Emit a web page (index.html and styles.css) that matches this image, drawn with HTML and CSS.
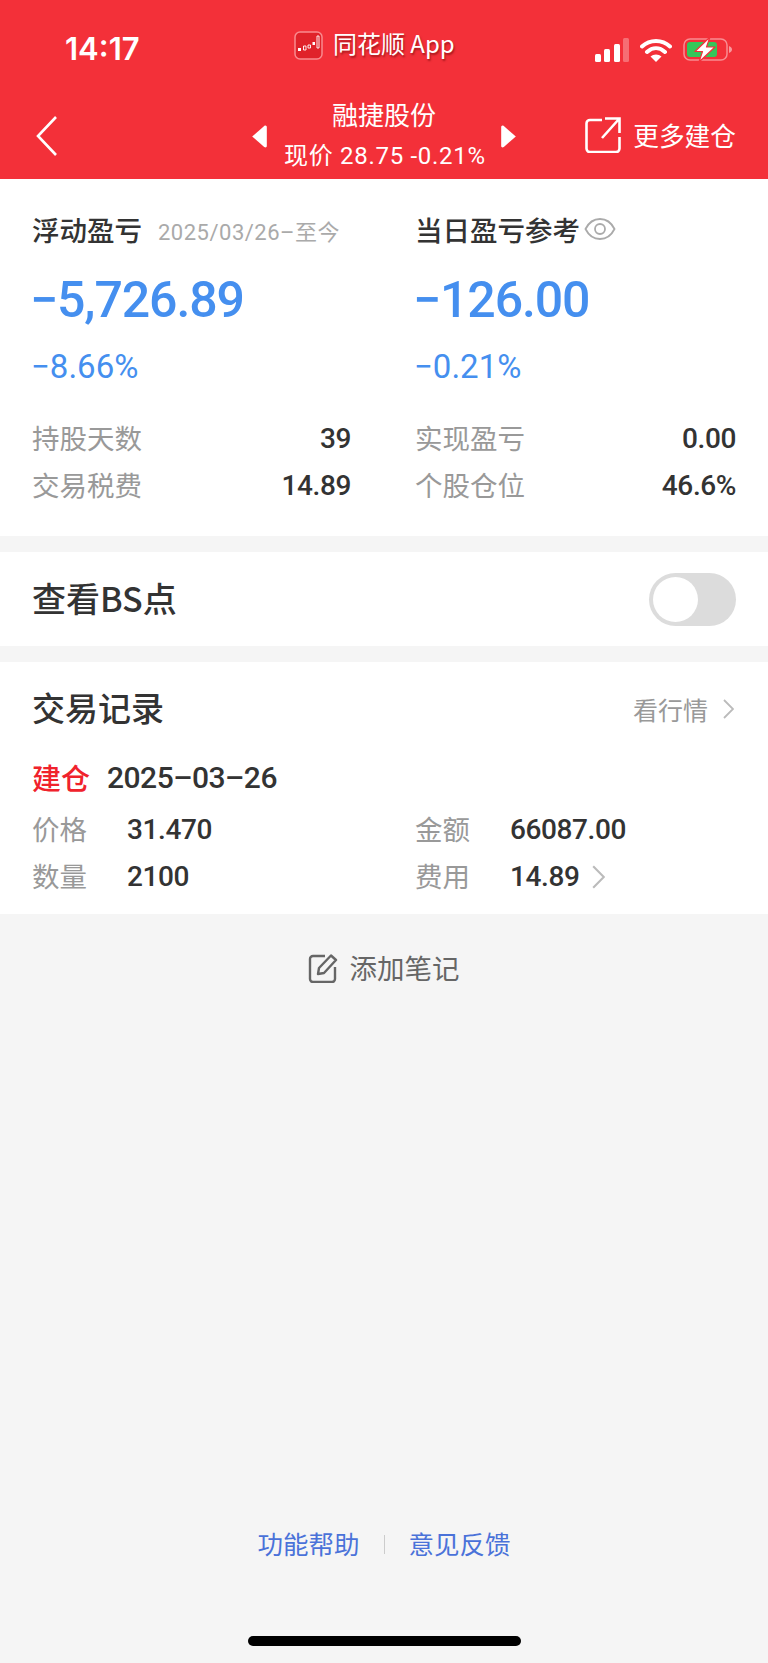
FILE: index.html
```html
<!DOCTYPE html>
<html lang="zh-CN">
<head>
<meta charset="utf-8">
<title>融捷股份</title>
<link rel="stylesheet" href="styles.css">
</head>
<body>
<div class="page">
  <header class="header">
    <div class="status">
      <span class="time">14:17</span>
      <div class="app">
        <svg class="app-icon" viewBox="0 0 29 29">
          <rect x="1" y="1" width="27" height="27" rx="5" fill="#e0222a" stroke="#f98a8e" stroke-width="1.5"/>
          <path d="M4 17h3v3H4z" fill="#fff"/>
          <path d="M9.500 15h2.500v4H9.500zM14 14h2.500v3H14z" fill="none" stroke="#fff" stroke-width=".9"/>
          <path d="M18.500 11h2.500v3h-2.500z" fill="#fff"/>
          <path d="M23 5h2v12h-2z" fill="none" stroke="#fff" stroke-width=".9"/>
        </svg>
        <span class="app-name">同花顺 App</span>
      </div>
      <div class="indicators">
        <svg class="signal" viewBox="0 0 34 24">
          <rect x="0" y="16" width="6" height="8" rx="1.5" fill="#fff"/>
          <rect x="9" y="11" width="6" height="13" rx="1.5" fill="#fff"/>
          <rect x="19" y="6" width="6" height="18" rx="1.5" fill="#fff"/>
          <rect x="28" y="0" width="6" height="24" rx="1.5" fill="#fff" opacity=".3"/>
        </svg>
        <svg class="wifi" viewBox="0 0 32 24">
          <path d="M2 8.500C10 1 22 1 30 8.500M7 14c5.500-5 12.500-5 18 0" fill="none" stroke="#fff" stroke-width="4" stroke-linecap="round"/>
          <path d="M10.500 18.500c3-2.800 8-2.800 11 0L16 24z" fill="#fff"/>
        </svg>
        <svg class="battery" viewBox="0 0 49 25">
          <rect x="1" y="2" width="43" height="21" rx="6" fill="none" stroke="#fff" stroke-opacity=".45" stroke-width="1.500"/>
          <rect x="4" y="5" width="30" height="15" rx="3" fill="#34c759"/>
          <path d="M46 9c2 .8 3 2 3 3.500s-1 2.700-3 3.500z" fill="#fff" fill-opacity=".5"/>
          <path d="M27 0 12 14.500h7.500L16 25l16-15h-8.500L27 0z" fill="#fff" stroke="#f33039" stroke-width="1.200" stroke-linejoin="round"/>
        </svg>
      </div>
    </div>
    <nav class="nav">
      <svg class="back" viewBox="0 0 22 40"><path d="M20 1 2 20l18 19" fill="none" stroke="#fff" stroke-width="2.600"/></svg>
      <div class="nav-center">
        <svg class="tri" viewBox="0 0 16 22"><path d="M15 2v18c0 1-1 2-2.500 1L1 11 12.500 1C14 0 15 1 15 2z" fill="#fff"/></svg>
        <div class="nav-title">
          <div class="stock">融捷股份</div>
          <div class="quote">现价 28.75 -0.21%</div>
        </div>
        <svg class="tri" viewBox="0 0 16 22"><path d="M1 2v18c0 1 1 2 2.500 1L15 11 3.500 1C2 0 1 1 1 2z" fill="#fff"/></svg>
      </div>
      <div class="more">
        <svg class="export" viewBox="0 0 36 36"><path d="M17 3H5a3.500 3.500 0 0 0-3.500 3.500v25A3.500 3.500 0 0 0 5 35h26a3.500 3.500 0 0 0 3.500-3.500V20M20 1.500h14.500V16M34 2 17 21" fill="none" stroke="#fff" stroke-width="2.600"/></svg>
        <span>更多建仓</span>
      </div>
    </nav>
  </header>

  <section class="card stats">
    <div class="col">
      <div class="col-head"><span class="head-title">浮动盈亏</span><span class="date">2025/03/26–至今</span></div>
      <div class="big">−5,726.89</div>
      <div class="pct">−8.66%</div>
      <div class="kv first"><span class="k">持股天数</span><span class="v">39</span></div>
      <div class="kv"><span class="k">交易税费</span><span class="v">14.89</span></div>
    </div>
    <div class="col">
      <div class="col-head"><span class="head-title">当日盈亏参考</span>
        <svg class="eye" viewBox="0 0 32 24"><path d="M1.500 12C5 5 10 2 16 2s11 3 14.500 10C27 19 22 22 16 22S5 19 1.500 12z" fill="none" stroke="#aaa" stroke-width="1.800"/><circle cx="16" cy="12" r="5" fill="none" stroke="#aaa" stroke-width="1.800"/></svg>
      </div>
      <div class="big">−126.00</div>
      <div class="pct">−0.21%</div>
      <div class="kv first"><span class="k">实现盈亏</span><span class="v">0.00</span></div>
      <div class="kv"><span class="k">个股仓位</span><span class="v">46.6%</span></div>
    </div>
  </section>

  <section class="card toggle-row">
    <span class="toggle-label">查看BS点</span>
    <div class="toggle"><div class="knob"></div></div>
  </section>

  <section class="card records">
    <div class="rec-head">
      <span class="rec-title">交易记录</span>
      <span class="rec-link">看行情
        <svg class="chev" viewBox="0 0 11 20"><path d="M1 1l9 9-9 9" fill="none" stroke="#bbb" stroke-width="1.800"/></svg>
      </span>
    </div>
    <div class="rec-type"><span class="build">建仓</span><span class="rec-date">2025–03–26</span></div>
    <div class="rec-grid">
      <div class="cell"><span class="k">价格</span><span class="rv">31.470</span></div>
      <div class="cell"><span class="k">金额</span><span class="rv">66087.00</span></div>
      <div class="cell"><span class="k">数量</span><span class="rv">2100</span></div>
      <div class="cell"><span class="k">费用</span><span class="rv">14.89</span>
        <svg class="chev chev-fee" viewBox="0 0 11 20"><path d="M1 1l9 9-9 9" fill="none" stroke="#bbb" stroke-width="1.800"/></svg>
      </div>
    </div>
  </section>

  <div class="note">
    <svg class="note-icon" viewBox="0 0 30 30"><path d="M17 3H5a3 3 0 0 0-3 3v20a3 3 0 0 0 3 3h19a3 3 0 0 0 3-3V14M10 21l1-6L23 2.500l5 4.500L16 20z" fill="none" stroke="#666" stroke-width="2.400" stroke-linejoin="round"/></svg>
    <span class="note-text">添加笔记</span>
  </div>

  <footer class="footer">
    <div class="links"><span class="link">功能帮助</span><i class="sep"></i><span class="link">意见反馈</span></div>
    <div class="home"></div>
  </footer>
</div>
</body>
</html>
```

FILE: styles.css
```css
* { box-sizing: border-box; }
html, body { margin: 0; padding: 0; }
body {
  font-family: Roboto, "Noto Sans CJK SC", sans-serif;
  background: #f5f5f5;
  color: #333;
}
.page {
  width: 768px;
  height: 1663px;
  display: flex;
  flex-direction: column;
  overflow: hidden;
}

/* header */
.header { height: 179px; background: #f33039; color: #fff; }
.status {
  height: 98px;
  padding: 30px 36px 0 65px;
  display: flex;
  align-items: flex-start;
  justify-content: space-between;
}
.time { font-size: 31px; font-weight: 600; line-height: 38px; font-family: Inter, Roboto, sans-serif; }
.app { display: flex; align-items: center; gap: 10px; height: 30px; margin-left: 14px; }
.app-icon { width: 29px; height: 29px; }
.app-name { font-size: 24px; line-height: 30px; margin-top: -4px; text-shadow: 1px 2px 2px rgba(90,0,0,.5); font-family: "Noto Sans CJK SC", sans-serif; }
.indicators { display: flex; align-items: center; gap: 11px; margin-top: 7px; }
.signal { width: 34px; height: 24px; }
.wifi { width: 32px; height: 24px; }
.battery { width: 49px; height: 25px; }

.nav {
  height: 81px;
  padding: 0 32px 0 36px;
  display: flex;
  align-items: flex-start;
}
.back { width: 22px; height: 40px; margin-top: 18px; }
.nav-center {
  width: 266px;
  margin-left: 193px;
  display: flex;
  align-items: flex-start;
  justify-content: space-between;
}
.tri { width: 17px; height: 23px; margin-top: 27px; flex: none; }
.nav-title { text-align: center; white-space: nowrap; width: 200px; flex: none; margin: 0 -16px; }
.stock { font-size: 26px; line-height: 32px; font-family: "Noto Sans CJK SC", sans-serif; }
.quote { font-size: 24px; line-height: 30px; margin-top: 11px; letter-spacing: .7px; font-family: Roboto, "Noto Sans CJK SC", sans-serif; }
.more { margin-left: auto; display: flex; align-items: center; gap: 12px; font-size: 25.700px; margin-top: 19px; font-family: "Noto Sans CJK SC", sans-serif; line-height: 36px; }
.export { width: 36px; height: 36px; }

/* cards */
.card { background: #fff; }
.stats {
  height: 357px;
  padding: 33px 32px 0;
  display: grid;
  grid-template-columns: 319px 321px;
  column-gap: 64px;
  margin-bottom: 16px;
}
.col-head { display: flex; align-items: center; height: 34px; }
.head-title { font-size: 27.500px; font-weight: 500; color: #333; line-height: 34px; font-family: "Noto Sans CJK SC", sans-serif; }
.date { font-size: 22px; color: #aaa; margin-left: 16px; letter-spacing: .5px; margin-top: 2px; }
.eye { width: 32px; height: 24px; margin-left: 4px; }
.big { font-size: 50px; line-height: 58px; color: #458fef; margin: 25px 0 0 -2px; font-weight: 500; letter-spacing: -1.100px; }
.pct { font-size: 33px; line-height: 40px; color: #458fef; margin: 18px 0 0 -1px; }
.kv { display: flex; justify-content: space-between; align-items: center; height: 47px; }
.kv.first { margin-top: 28px; }
.k { font-size: 27.500px; color: #999; line-height: 36px; margin-top: -3px; font-family: "Noto Sans CJK SC", sans-serif; }
.v { font-size: 28px; font-weight: 500; color: #333; letter-spacing: -.4px; }

.toggle-row {
  height: 94px;
  margin-bottom: 16px;
  padding: 0 32px;
  display: flex;
  align-items: center;
  justify-content: space-between;
}
.toggle-label { font-size: 34px; font-weight: 500; color: #333; padding-bottom: 4px; font-family: "Noto Sans CJK SC", sans-serif; }
.toggle {
  width: 87px;
  height: 53px;
  border-radius: 27px;
  background: #dcdcdc;
  padding: 4px;
}
.knob { width: 45px; height: 45px; border-radius: 50%; background: #fff; }

.records { height: 252px; padding: 27px 32px 0; }
.rec-head { display: flex; align-items: center; justify-content: space-between; height: 40px; padding-right: 2px; }
.rec-title { font-size: 33px; font-weight: 500; color: #333; padding-bottom: 4px; font-family: "Noto Sans CJK SC", sans-serif; }
.rec-link { display: flex; align-items: center; gap: 15px; font-size: 25px; color: #999; font-family: "Noto Sans CJK SC", sans-serif; }
.chev { width: 11px; height: 20px; }
.rec-type { display: flex; align-items: center; height: 40px; margin-top: 28px; gap: 17px; }
.build { font-size: 29px; color: #f0222c; font-weight: 500; font-family: "Noto Sans CJK SC", sans-serif; }
.rec-date { font-size: 30px; color: #333; font-weight: 500; letter-spacing: -.5px; }
.rec-grid {
  display: grid;
  grid-template-columns: 319px 321px;
  column-gap: 64px;
  grid-auto-rows: 47px;
  margin-top: 9px;
}
.cell { display: flex; align-items: center; }
.cell .k { width: 95px; flex: none; }
.rv { font-size: 28px; font-weight: 500; color: #333; letter-spacing: -.4px; }
.chev-fee { height: 24px; width: 13px; margin-left: 13px; }

.note {
  display: flex;
  align-items: center;
  justify-content: center;
  gap: 12px;
  height: 30px;
  margin-top: 39px;
  font-size: 27.500px;
  color: #666;
  font-family: "Noto Sans CJK SC", sans-serif;
  padding-right: 1px;
}
.note-text { padding-bottom: 3px; }
.note-icon { width: 30px; height: 30px; }

.footer { margin-top: auto; display: flex; flex-direction: column; align-items: center; padding-bottom: 17px; }
.links {
  display: flex;
  align-items: center;
  gap: 24px;
  font-size: 25.500px;
  color: #4a72d9;
  height: 36px;
  margin-bottom: 1px;
  font-family: "Noto Sans CJK SC", sans-serif;
}
.link { padding-bottom: 4px; }
.sep { width: 1px; height: 19px; background: #ccc; }
.home { width: 273px; height: 10px; border-radius: 5px; background: #000; margin-top: 73px; }
```
